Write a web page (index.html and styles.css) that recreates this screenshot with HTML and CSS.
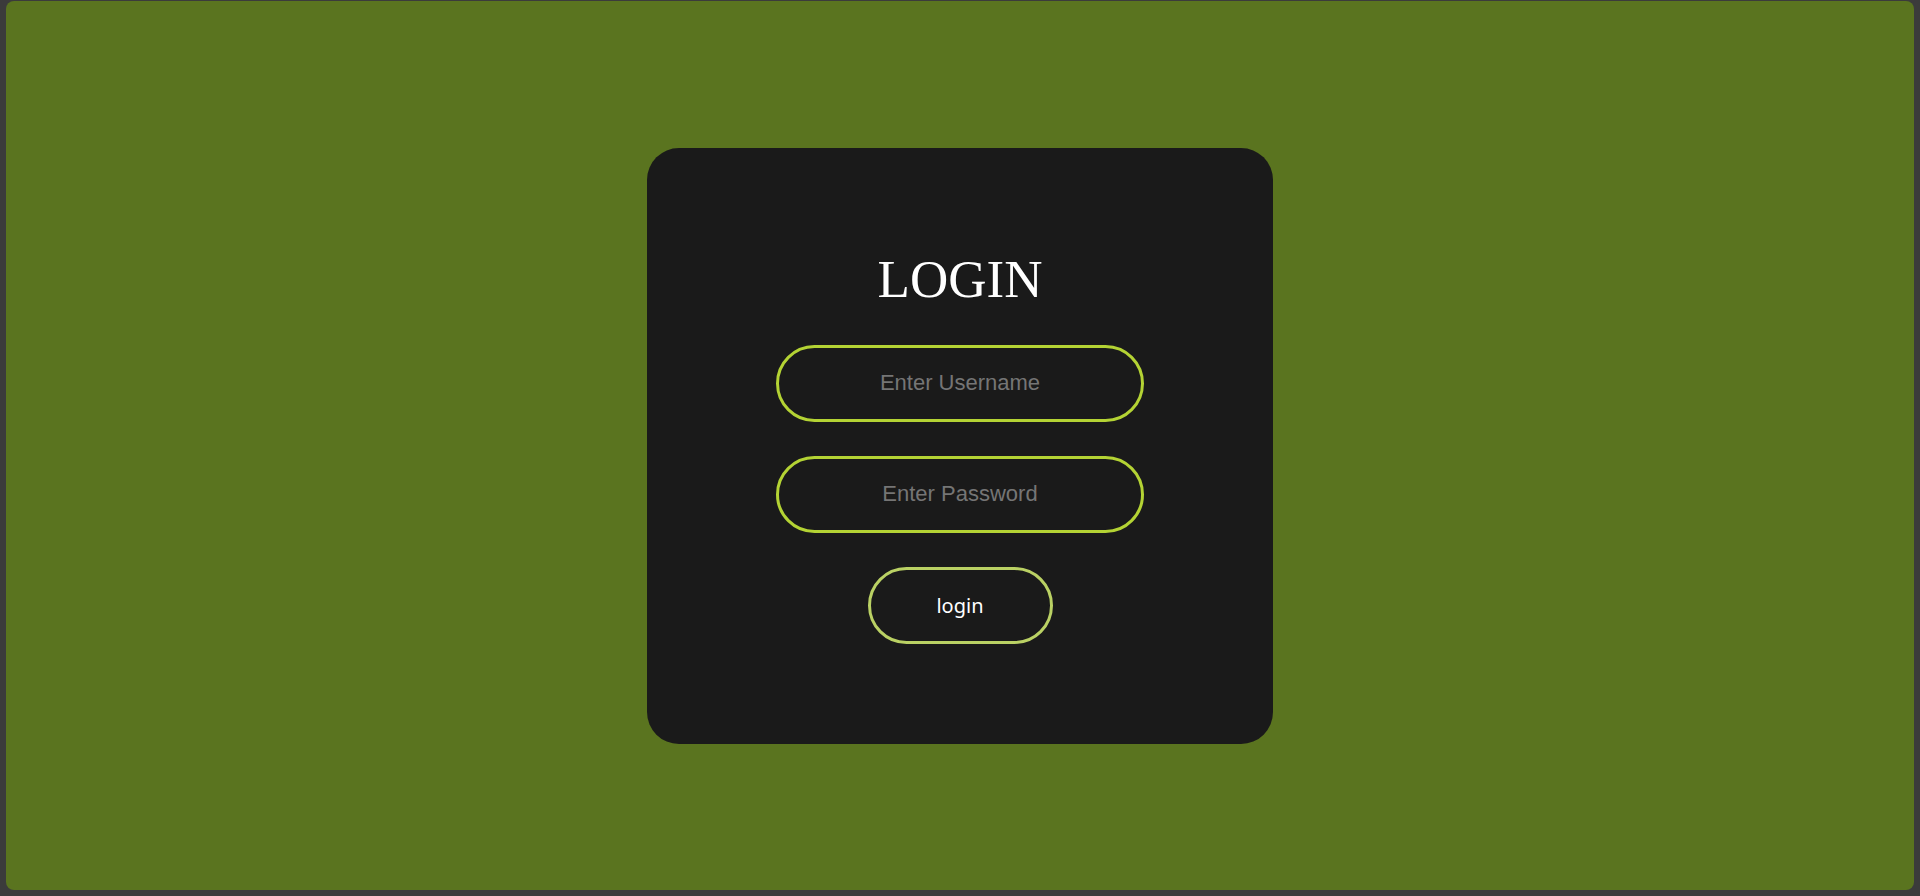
FILE: index.html
```html
<!DOCTYPE html>
<html lang="en">
<head>
<meta charset="utf-8">
<title>Login</title>
<link rel="stylesheet" href="styles.css">
</head>
<body>
<main class="page">
  <form class="card" onsubmit="return false;">
    <h1 class="title">LOGIN</h1>
    <input class="field" type="text" placeholder="Enter Username">
    <input class="field" type="password" placeholder="Enter Password">
    <button class="btn" type="submit">login</button>
  </form>
</main>
</body>
</html>
```

FILE: styles.css
```css
html, body {
  margin: 0;
  padding: 0;
  height: 100%;
}

body {
  background: #3b3b3b;
  padding: 1px 6px 6px 6px;
  box-sizing: border-box;
}

.page {
  height: 100%;
  background: #5a741f;
  border-radius: 8px;
  display: flex;
  align-items: center;
  justify-content: center;
}

.card {
  width: 626px;
  height: 596px;
  box-sizing: border-box;
  background: #1a1a1a;
  border-radius: 32px;
  padding: 105px 0 99px;
  display: flex;
  flex-direction: column;
  align-items: center;
}

.title {
  margin: 0 0 40px;
  font-family: "Liberation Serif", "Times New Roman", serif;
  font-weight: normal;
  font-size: 53px;
  line-height: 52px;
  color: #ffffff;
}

.field {
  width: 368px;
  height: 77px;
  box-sizing: border-box;
  margin: 0 0 34px;
  border: 3px solid #b4d334;
  border-radius: 40px;
  background: transparent;
  color: #ffffff;
  text-align: center;
  font-family: "Liberation Sans", Arial, sans-serif;
  font-size: 22px;
  outline: none;
  padding: 0 20px;
}

.field::placeholder {
  color: #757575;
}

.btn {
  width: 185px;
  height: 77px;
  box-sizing: border-box;
  border: 3px solid #bad164;
  border-radius: 40px;
  background: transparent;
  color: #ffffff;
  font-family: "Noto Sans", "Open Sans", sans-serif;
  font-size: 20px;
  padding: 0;
  cursor: pointer;
}
```
